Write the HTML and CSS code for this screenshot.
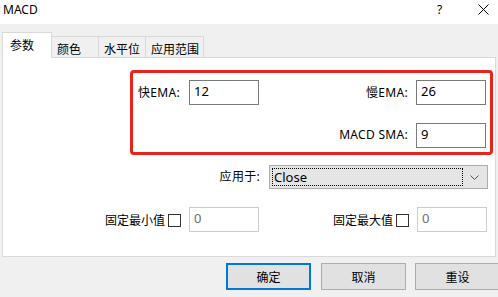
FILE: index.html
```html
<!DOCTYPE html>
<html>
<head>
<meta charset="utf-8">
<link rel="stylesheet" href="styles.css">
</head>
<body>
<div class="dialog">
  <div class="titlebar">
    <span class="title">MACD</span>
    <span class="help">?</span>
    <span class="close"><svg width="11" height="11" viewBox="0 0 11 11"><path d="M0.5 0.5L10.5 10.5M10.5 0.5L0.5 10.5" stroke="#000" stroke-width="1" fill="none"/></svg></span>
  </div>
  <div class="tabs">
    <div class="tab active">参数</div>
    <div class="tab">颜色</div>
    <div class="tab">水平位</div>
    <div class="tab">应用范围</div>
  </div>
  <div class="panel">
    <div class="redbox">
      <div class="lbl left">快EMA:</div>
      <div class="field">12</div>
      <div class="lbl right">慢EMA:</div>
      <div class="field">26</div>
      <div></div>
      <div></div>
      <div class="lbl right">MACD SMA:</div>
      <div class="field">9</div>
    </div>
    <div class="applyrow">
      <span class="lbl">应用于:</span>
      <div class="select">
        <div class="focus">Close</div>
        <svg class="chev" width="9" height="5" viewBox="0 0 9 5"><path d="M0.5 0.5L4.5 4.5L8.5 0.5" stroke="#555" stroke-width="1" fill="none"/></svg>
      </div>
    </div>
    <div class="fixrow">
      <div class="chk"><span>固定最小值</span><span class="box"></span></div>
      <div class="field disabled">0</div>
      <div class="chk"><span>固定最大值</span><span class="box"></span></div>
      <div class="field disabled">0</div>
    </div>
  </div>
  <div class="buttons">
    <div class="btn default">确定</div>
    <div class="btn">取消</div>
    <div class="btn">重设</div>
  </div>
</div>
</body>
</html>
```
FILE: styles.css
```css
html, body {
  margin: 0;
  padding: 0;
}
body {
  width: 498px;
  height: 297px;
  overflow: hidden;
  background: #f0f0f0;
  font-family: "Noto Sans", "Noto Sans CJK SC", sans-serif;
  font-size: 12px;
  color: #000;
}
.dialog {
  display: flex;
  flex-direction: column;
}
.titlebar {
  background: #fff;
  display: flex;
  align-items: center;
  padding-bottom: 5px;
  box-sizing: border-box;
  height: 24px;
}
.title {
  margin-left: 3px;
  font-size: 12px;
  flex: 1;
}
.help {
  width: 10px;
  margin-right: 31px;
  font-size: 12px;
}
.close {
  display: flex;
  margin-right: 9px;
}
.tabs {
  display: flex;
  align-items: flex-end;
  margin-top: 8px;
  padding-left: 2px;
  height: 25px;
  position: relative;
  z-index: 1;
}
.tab {
  height: 21px;
  box-sizing: border-box;
  border: 1px solid #d9d9d9;
  border-bottom: none;
  border-left: none;
  padding: 3px 0 0 5px;
  font-family: "Noto Sans CJK SC", sans-serif;
  background: #f0f0f0;
}
.tab:nth-child(2) { width: 47px; }
.tab:nth-child(3) { width: 47px; }
.tab:nth-child(4) { width: 58px; }
.tab.active {
  width: 50px;
  height: 26px;
  background: #fff;
  border-left: 1px solid #d9d9d9;
  padding: 3px 0 0 7px;
  margin-bottom: -1px;
}
.panel {
  margin: 0 2px 0 2px;
  height: 200px;
  box-sizing: border-box;
  background: #fff;
  border: 1px solid #d9d9d9;
  width: 494px;
}
.redbox {
  margin: 12px 0 0 127px;
  width: 363px;
  height: 85px;
  box-sizing: border-box;
  border: 3px solid #e8231c;
  border-radius: 4px;
  padding: 7px 4px 4px 5px;
  display: grid;
  grid-template-columns: 51px 70px 1fr 70px;
  grid-template-rows: 25px 25px;
  row-gap: 18px;
}
.lbl {
  font-family: "Noto Sans", "Noto Sans CJK SC", sans-serif;
  letter-spacing: 0.3px;
  display: flex;
  align-items: center;
  padding-bottom: 2px;
}
.lbl.right {
  justify-content: flex-end;
  padding-right: 8px;
}
.field {
  box-sizing: border-box;
  height: 25px;
  width: 70px;
  border: 1px solid #7a7a7a;
  background: #fff;
  padding: 1px 0 0 4px;
  font-size: 13px;
}
.field.disabled {
  border-color: #cccccc;
  color: #6d6d6d;
}
.applyrow {
  display: flex;
  justify-content: flex-end;
  align-items: center;
  padding-right: 7px;
  margin-top: 10px;
  gap: 9px;
}
.select {
  width: 219px;
  height: 24px;
  box-sizing: border-box;
  background: #e5e5e5;
  border: 1px solid #acacac;
  display: flex;
  align-items: center;
  padding: 2px;
}
.focus {
  flex: 1;
  height: 18px;
  box-sizing: border-box;
  border: 1px dotted #000;
  padding-left: 1px;
  font-size: 13px;
  line-height: 16px;
}
.chev {
  margin: 1px 6px 0 7px;
}
.fixrow {
  display: grid;
  grid-template-columns: 186px 70px 1fr 70px;
  margin-top: 18px;
  padding-right: 8px;
  height: 25px;
}
.chk {
  display: flex;
  justify-content: flex-end;
  align-items: center;
  padding-right: 8px;
  gap: 3px;
  font-family: "Noto Sans CJK SC", sans-serif;
}
.box {
  width: 13px;
  height: 13px;
  box-sizing: border-box;
  border: 1px solid #333;
  background: #fff;
  margin-top: 1px;
}
.buttons {
  display: flex;
  justify-content: flex-end;
  margin-top: 6px;
  gap: 9px;
  margin-right: -2px;
}
.btn {
  width: 85px;
  height: 27px;
  box-sizing: border-box;
  background: #e1e1e1;
  border: 1px solid #adadad;
  display: flex;
  align-items: center;
  justify-content: center;
  font-family: "Noto Sans CJK SC", sans-serif;
}
.btn.default {
  border: 2px solid #0078d7;
  margin-right: 1px;
}
```
